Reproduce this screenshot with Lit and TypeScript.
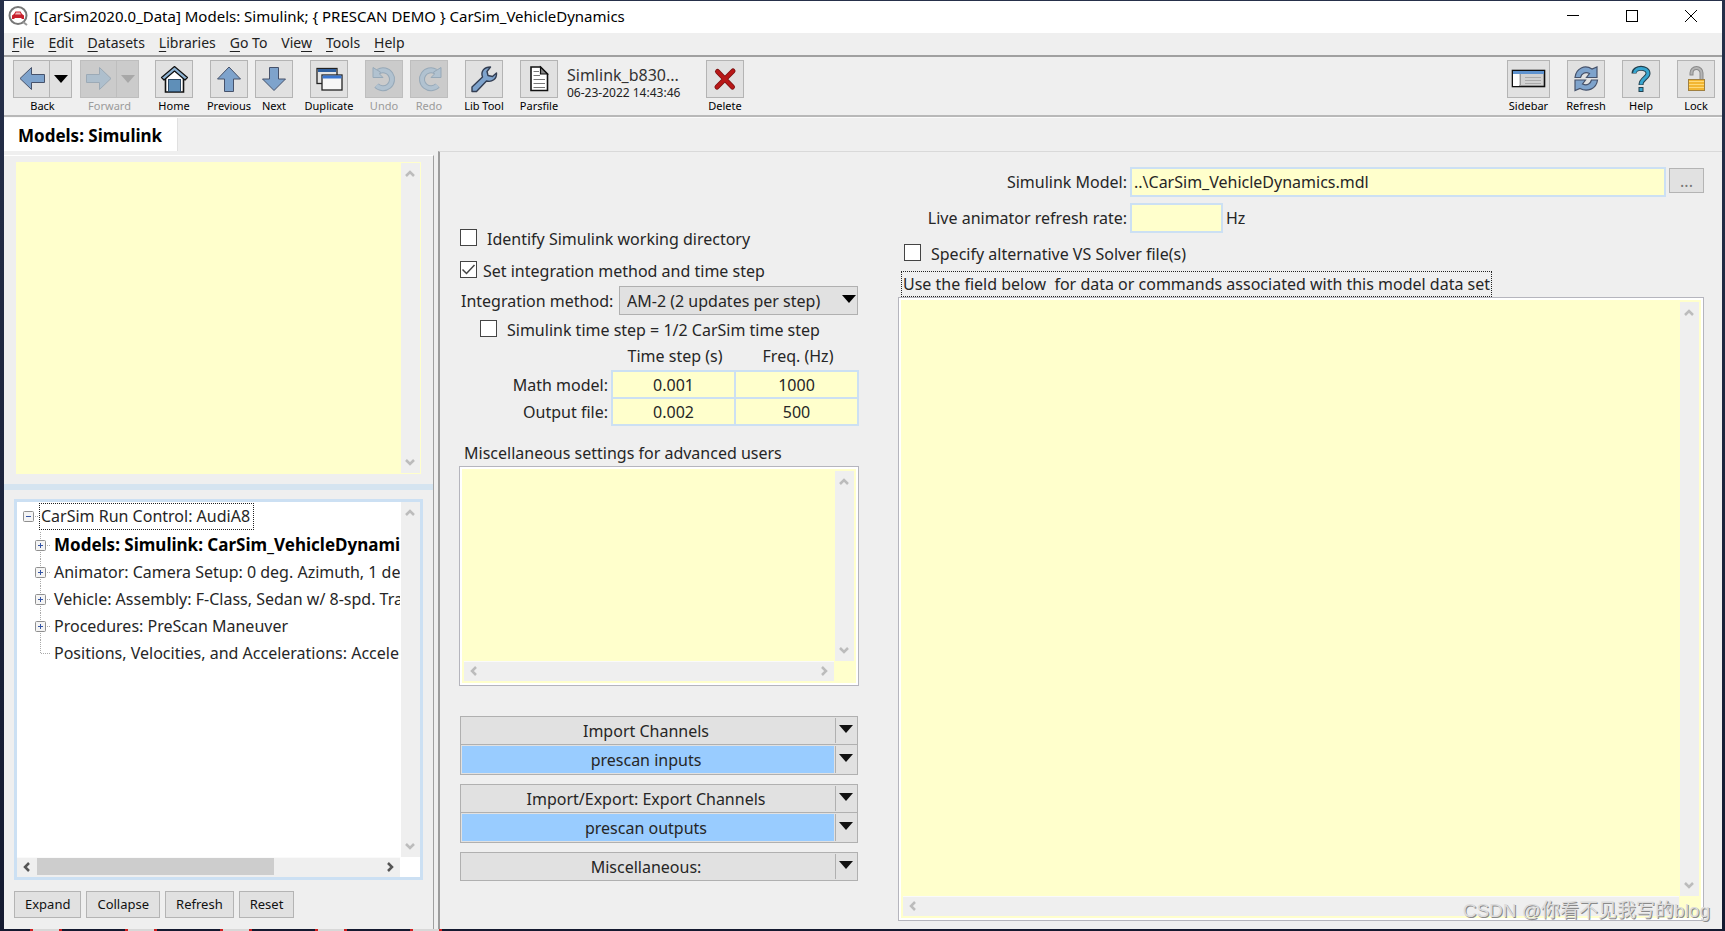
import { LitElement, html, css, svg, nothing } from "lit";
import { customElement, property } from "lit/decorators.js";
import { classMap } from "lit/directives/class-map.js";

const BLUE = "#7ea3cc";
const INK = "#46526b";

const undoShape = svg`
  <path d="M12.5 10.5 A9 9 0 1 1 10.5 24.5" fill="none" stroke="#97a9b8" stroke-width="6"/>
  <path d="M12.5 10.5 A9 9 0 1 1 10.5 24.5" fill="none" stroke="#b1c2d0" stroke-width="4"/>
  <path d="M7 6.5 V16.5 H17 L13.5 13 L14.5 11 L11 9Z" fill="#b1c2d0" stroke="#97a9b8"/>`;

const icons: Record<string, unknown> = {
  back: svg`<path d="M6 17.5 L17.5 6.5 V13.5 H30.5 V21.5 H17.5 V28.5Z" fill=${BLUE} stroke=${INK}/>`,
  forward: svg`<path d="M30 17.5 L18.5 6.5 V13.5 H5.5 V21.5 H18.5 V28.5Z" fill="#aebfcd" stroke="#9caab6"/>`,
  home: svg`
    <path d="M9.5 17 V31 H27.5 V17 L18.5 9Z" fill="#fff" stroke="#111" stroke-width="1.6"/>
    <path d="M18.5 5.5 L5.5 16.5 L8 19 L18.5 10 L29 19 L31.5 16.5Z" fill="#8fb4d4" stroke="#111" stroke-width="1.2" stroke-linejoin="round"/>
    <rect x="12.5" y="18.5" width="12" height="12" fill="#5f8fb8" stroke="#2d4a66"/>`,
  up: svg`<path d="M18 6 L29.5 18 H22.5 V30.5 H13.5 V18 H6.5Z" fill=${BLUE} stroke=${INK}/>`,
  down: svg`<path d="M18 29.5 L29.5 18 H22.5 V6.5 H13.5 V18 H6.5Z" fill=${BLUE} stroke=${INK}/>`,
  duplicate: svg`
    <rect x="6" y="7.5" width="20" height="15" fill="#e4e4e4" stroke="#222" stroke-width="1.3"/>
    <rect x="7" y="8" width="18" height="3" fill="#2f5f9e"/>
    <rect x="11" y="14" width="20" height="15" fill="#f6f6f6" stroke="#222" stroke-width="1.3"/>
    <rect x="11.5" y="14.5" width="19" height="3" fill="#3a76d0"/>`,
  undo: undoShape,
  redo: svg`<g transform="translate(37 0) scale(-1 1)">${undoShape}</g>`,
  wrench: svg`<path d="M6 26 L16.5 16 C14.5 10.5 18 6 24.5 6 L21 10.5 L22 14.5 L26.5 15.5 L30.5 12 C31 18 26 21.5 20.5 20 L10.5 30.5 H6Z" fill=${BLUE} stroke="#333e52" stroke-width="1.4" stroke-linejoin="round"/>`,
  file: svg`
    <path d="M10 6 H19.5 L26.5 13 V29.5 H10Z" fill="#fff" stroke="#111" stroke-width="1.6"/>
    <path d="M19.5 6 V13 H26.5Z" fill="#888" stroke="#111" stroke-width="1.2"/>
    <path d="M12.5 10.5H18M12.5 14.5H19M12.5 18.5H24M12.5 22.5H24M12.5 26.5H24" stroke="#777"/>`,
  remove: svg`
    <path d="M10.5 10.5 L25.5 26 M26 10 L10 26" stroke="#7c1010" stroke-width="5" stroke-linecap="round"/>
    <path d="M10.5 10.5 L25.5 26 M26 10 L10 26" stroke="#b81818" stroke-width="3.4" stroke-linecap="round"/>`,
  sidebar: svg`
    <rect x="4.5" y="9.5" width="32" height="16" fill="#d2d2d2" stroke="#111" stroke-width="1.6"/>
    <rect x="5" y="10" width="31" height="3" fill="#5f93cf"/>
    <rect x="5" y="13" width="6" height="12" fill="#fff"/>
    <path d="M12.5 13V25" stroke="#999"/>
    <path d="M17 16.5H33M17 19.5H33M17 22.5H33" stroke="#aaa"/>`,
  refresh: svg`
    <path d="M7 16.5 C8 7 17 3.5 24 8 L29 6 V16.5 H18.5 L21.5 12.5 C17 10.5 13.5 12.5 12.5 16.5Z" fill=${BLUE} stroke=${INK} stroke-width="1.2"/>
    <path d="M29.5 19 C28.5 28 19 31.5 12 27.5 L7 29.5 V19 H17.5 L14.5 23 C19 25 22.500 23 23.5 19Z" fill=${BLUE} stroke=${INK} stroke-width="1.2"/>`,
  help: svg`
    <path d="M11 12.5 C11 5.5 25 5.5 25 12.5 C25 17 18 17.5 18 24" fill="none" stroke="#23404e" stroke-width="5"/>
    <path d="M11.5 12 C12 6 25 6 25 12.5 C25 17 18 17.5 18 23.5" fill="none" stroke="#37a5cf" stroke-width="3"/>
    <rect x="16" y="26.5" width="4" height="4" fill="#37a5cf" stroke="#23404e"/>`,
  lock: svg`
    <path d="M13.5 14.5 V12 A5 5 0 0 1 23.5 12 V18" fill="none" stroke="#8a8a8a" stroke-width="4"/>
    <path d="M13.5 13.5 V12 A5 5 0 0 1 23.5 12 V18" fill="none" stroke="#b4b4b4" stroke-width="2"/>
    <rect x="10.5" y="18.5" width="16" height="11" fill="#f2b632" stroke="#a08040"/>
    <path d="M11 20.5H26M11 23.5H26M11 26.5H26" stroke="#ffd978"/>`,
};

const caret = html`<svg class="caret" width="14" height="8" viewBox="0 0 14 8" aria-hidden="true"><path d="M0 0H14L7 8Z" fill="currentColor"/></svg>`;

const shared = css`
  * {
    box-sizing: border-box;
  }
  button,
  input,
  select,
  textarea {
    font: inherit;
    color: inherit;
    margin: 0;
    padding: 0;
    border-radius: 0;
    outline: none;
  }
  svg {
    display: block;
    flex: none;
  }
`;

@customElement("scroll-frame")
export class ScrollFrame extends LitElement {
  @property({ type: Boolean }) horizontal = false;
  @property({ type: Number }) thumb = 0;

  static styles = [
    shared,
    css`
      :host {
        display: grid;
        grid-template-columns: minmax(0, 1fr) 19px;
        grid-template-rows: minmax(0, 1fr) auto;
        column-gap: 1px;
        min-width: 0;
        min-height: 0;
      }
      .view {
        display: grid;
        min-width: 0;
        min-height: 0;
        overflow: hidden;
      }
      .bar {
        display: flex;
        justify-content: space-between;
        align-items: center;
        background: #efefef;
        color: #bcbcbc;
      }
      .vertical {
        flex-direction: column;
        padding: 6px 2px 6px 0;
      }
      .across {
        height: 20px;
        padding: 0 5px 2px;
        gap: 5px;
        border-top: 1px solid #fafafa;
      }
      .live {
        color: #555;
      }
      .track {
        flex: 1;
        height: 17px;
      }
      .thumb {
        height: 100%;
        background: #cdcdcd;
      }
    `,
  ];

  private chevron(d: string) {
    return html`<svg width="10" height="10" viewBox="0 0 10 10" aria-hidden="true">
      <path d=${d} fill="none" stroke="currentColor" stroke-width="2.5" />
    </svg>`;
  }

  render() {
    return html`
      <div class="view"><slot></slot></div>
      <div class="bar vertical">${this.chevron("M1 7L5 3L9 7")}${this.chevron("M1 3L5 7L9 3")}</div>
      ${this.horizontal
        ? html`<div class=${classMap({ bar: true, across: true, live: this.thumb > 0 })}>
            ${this.chevron("M7 1L3 5L7 9")}
            <div class="track">
              ${this.thumb > 0 ? html`<div class="thumb" style="width:${this.thumb}%"></div>` : nothing}
            </div>
            ${this.chevron("M3 1L7 5L3 9")}
          </div>`
        : nothing}
    `;
  }
}

interface Tool {
  label: string;
  icon: string;
  near?: boolean;
  disabled?: boolean;
  wide?: boolean;
}

const historyTools: Tool[] = [
  { label: "Back", icon: "back" },
  { label: "Forward", icon: "forward", disabled: true },
];
const editTools: Tool[] = [
  { label: "Home", icon: "home" },
  { label: "Previous", icon: "up" },
  { label: "Next", icon: "down", near: true },
  { label: "Duplicate", icon: "duplicate" },
  { label: "Undo", icon: "undo", disabled: true },
  { label: "Redo", icon: "redo", disabled: true, near: true },
  { label: "Lib Tool", icon: "wrench" },
  { label: "Parsfile", icon: "file" },
];
const viewTools: Tool[] = [
  { label: "Sidebar", icon: "sidebar", wide: true },
  { label: "Refresh", icon: "refresh" },
  { label: "Help", icon: "help" },
  { label: "Lock", icon: "lock" },
];

@customElement("tool-bar")
export class ToolBar extends LitElement {
  static styles = [
    shared,
    css`
      :host {
        display: flex;
        align-items: flex-start;
        padding: 3px 7px 0 9px;
        height: 60px;
        font-size: 11px;
        line-height: 16px;
        color: #000;
        background: #efefef;
        border-bottom: 2px solid #b8b8b8;
      }
      .group {
        display: flex;
      }
      .history {
        gap: 8px;
      }
      .tool {
        display: flex;
        flex-direction: column;
        align-items: center;
        width: 38px;
        margin-left: 17px;
        border: 0;
        background: none;
        white-space: nowrap;
      }
      .near {
        margin-left: 7px;
      }
      .wide {
        width: 43px;
      }
      .split {
        width: 59px;
        margin-left: 0;
      }
      .history + .group {
        margin-left: -1px;
      }
      .face {
        display: flex;
        justify-content: center;
        align-items: center;
        width: 100%;
        min-width: 0;
        height: 38px;
        background: #e1e1e1;
        border: 1px solid #b4b4b4;
      }
      .pair {
        display: flex;
        width: 59px;
      }
      .pair .drop {
        width: 23px;
        margin-left: -1px;
        flex: none;
      }
      .disabled {
        color: #9b9b9b;
      }
      .disabled .face {
        background: #cbcbcb;
        border-color: #bebebe;
        color: #a8a8a8;
      }
      .parsfile {
        display: flex;
        flex-direction: column;
        width: 131px;
        padding: 4px 0 0 9px;
        white-space: nowrap;
        color: #333;
      }
      .name {
        font-size: 16px;
        line-height: 22px;
      }
      .stamp {
        font-size: 12px;
        line-height: 14px;
        color: #222;
      }
      .right {
        margin-left: auto;
      }
    `,
  ];

  private icon(t: Tool) {
    const w = t.wide ? 41 : 36;
    return html`<svg width=${w} height="36" viewBox="0 0 ${w} 36" aria-hidden="true">${icons[t.icon]}</svg>`;
  }

  private tool(t: Tool) {
    return html`<button
      class=${classMap({ tool: true, near: !!t.near, wide: !!t.wide, disabled: !!t.disabled })}
      ?disabled=${!!t.disabled}
    >
      <span class="face">${this.icon(t)}</span><span>${t.label}</span>
    </button>`;
  }

  private splitTool(t: Tool) {
    return html`<div class=${classMap({ tool: true, split: true, disabled: !!t.disabled })}>
      <div class="pair">
        <button class="face" aria-label=${t.label} ?disabled=${!!t.disabled}>${this.icon(t)}</button>
        <button class="face drop" aria-label="${t.label} history" ?disabled=${!!t.disabled}>${caret}</button>
      </div>
      <span>${t.label}</span>
    </div>`;
  }

  render() {
    return html`
      <div class="group history">${historyTools.map((t) => this.splitTool(t))}</div>
      <div class="group">${editTools.map((t) => this.tool(t))}</div>
      <div class="parsfile"><span class="name">Simlink_b830...</span><span class="stamp">06-23-2022 14:43:46</span></div>
      <div class="group">${this.tool({ label: "Delete", icon: "remove" })}</div>
      <div class="group right">${viewTools.map((t) => this.tool(t))}</div>
    `;
  }
}

const treeItems = [
  { text: "Models: Simulink: CarSim_VehicleDynamics", current: true, branch: true },
  { text: "Animator: Camera Setup: 0 deg. Azimuth, 1 deg. El.", branch: true },
  { text: "Vehicle: Assembly: F-Class, Sedan w/ 8-spd. Trans.", branch: true },
  { text: "Procedures: PreScan Maneuver", branch: true },
  { text: "Positions, Velocities, and Accelerations: Accelerations" },
];

@customElement("side-panel")
export class SidePanel extends LitElement {
  static styles = [
    shared,
    css`
      :host {
        display: flex;
        flex-direction: column;
        width: 430px;
        flex: none;
        border-right: 1px solid #a0a0a0;
        border-top: 1px solid #fff;
      }
      .notes {
        flex: 313 1 0;
        margin: 6px 12px 10px 12px;
        background: #ffffcc;
        border: 1px solid #ffffcc;
      }
      .notes textarea {
        border: 0;
        background: #ffffcc;
        resize: none;
      }
      .divider {
        height: 6px;
        background: #d5e4f0;
        flex: none;
      }
      .tree {
        flex: 379 1 0;
        margin: 9px 10px 0 10px;
        background: #fff;
        border: 3px solid #cce0f3;
      }
      ul {
        list-style: none;
        margin: 0;
        padding: 0;
      }
      .row {
        display: flex;
        align-items: center;
        height: 27px;
        white-space: nowrap;
      }
      .root {
        height: 30px;
        padding-left: 6px;
      }
      .child {
        padding-left: 18px;
      }
      .child svg {
        margin-right: 2px;
      }
      .root svg {
        margin-right: -1px;
      }
      .focus {
        border: 1px dotted #222;
        padding: 0 3px 0 1px;
        line-height: 25px;
      }
      .current {
        font-size: 17px;
        font-weight: 700;
        color: #000;
      }
      .actions {
        display: flex;
        gap: 5px;
        padding: 11px 10px;
        font-size: 13px;
        line-height: 25px;
        color: #111;
      }
      .actions button {
        height: 27px;
        padding: 0 10px;
        background: #e1e1e1;
        border: 1px solid #b4b4b4;
      }
    `,
  ];

  private node(kind: "root" | "branch" | "leaf", last = false) {
    const dots = last ? "M5.5 0V13.5" : "M5.5 0V27";
    return html`<svg width="17" height="27" viewBox="0 0 17 27" aria-hidden="true">
      ${kind === "root" ? nothing : svg`<path d=${dots} stroke="#aaa" stroke-dasharray="1 1"/>`}
      <path d=${kind === "leaf" ? "M6 13.5H16" : "M12 13.5H16"} stroke="#aaa" stroke-dasharray="1 1" />
      ${kind === "leaf"
        ? nothing
        : svg`<rect x="0.5" y="8.5" width="10" height="10" rx="1" fill="#f4f4f4" stroke="#909090"/>
            <path d=${kind === "root" ? "M3 13.5H8" : "M3 13.5H8M5.5 11V16"} stroke="#3555a5"/>`}
    </svg>`;
  }

  render() {
    return html`
      <scroll-frame class="notes"><textarea aria-label="Notes"></textarea></scroll-frame>
      <div class="divider"></div>
      <scroll-frame class="tree" horizontal thumb="69">
        <ul>
          <li>
            <div class="row root">${this.node("root")}<span class="focus">CarSim Run Control: AudiA8</span></div>
            <ul>
              ${treeItems.map(
                (t, i) => html`<li class="row child">
                  ${this.node(t.branch ? "branch" : "leaf", i === treeItems.length - 1)}
                  <span class=${classMap({ current: !!t.current })}>${t.text}</span>
                </li>`,
              )}
            </ul>
          </li>
        </ul>
      </scroll-frame>
      <div class="actions">
        ${["Expand", "Collapse", "Refresh", "Reset"].map((l) => html`<button>${l}</button>`)}
      </div>
    `;
  }
}

const channelGroups = [
  [{ text: "Import Channels" }, { text: "prescan inputs", linked: true }],
  [{ text: "Import/Export: Export Channels" }, { text: "prescan outputs", linked: true }],
  [{ text: "Miscellaneous:" }],
];

const timing = [
  { name: "Math model:", step: "0.001", freq: "1000" },
  { name: "Output file:", step: "0.002", freq: "500" },
];

@customElement("model-form")
export class ModelForm extends LitElement {
  static styles = [
    shared,
    css`
      :host {
        display: grid;
        grid-template-columns: 400px minmax(0, 1fr);
        column-gap: 39px;
        flex: 1;
        min-width: 0;
        padding: 14px 18px 8px 19px;
        border-left: 2px solid #9d9d9d;
        border-top: 1px solid #d9d9d9;
        margin-left: 4px;
      }
      .solver {
        display: flex;
        flex-direction: column;
        padding-top: 56px;
      }
      .model {
        display: flex;
        flex-direction: column;
        min-height: 0;
        padding-top: 1px;
      }
      .check {
        display: flex;
        align-items: center;
        gap: 10px;
        height: 30px;
        padding-left: 1px;
      }
      .check span {
        padding-top: 3px;
      }
      .tight {
        gap: 6px;
        height: 34px;
      }
      .nested {
        height: 27px;
        padding-left: 21px;
      }
      .check input {
        appearance: none;
        width: 17px;
        height: 17px;
        background: #fff;
        border: 1px solid #444;
        flex: none;
      }
      .check input:checked {
        background: #fff
          url("data:image/svg+xml,%3Csvg xmlns='http://www.w3.org/2000/svg' viewBox='0 0 15 15'%3E%3Cpath d='M1.5 7.5L5.5 11.5L13.5 3' fill='none' stroke='%23444' stroke-width='1.5'/%3E%3C/svg%3E");
      }
      .method {
        display: flex;
        align-items: center;
        justify-content: space-between;
        padding: 0 1px 0 2px;
      }
      .picker {
        display: grid;
        align-items: center;
        width: 239px;
      }
      .picker > * {
        grid-area: 1 / 1;
      }
      .picker select {
        appearance: none;
        width: 100%;
        height: 29px;
        padding-left: 7px;
        background: #e1e1e1;
        border: 1px solid #b0b0b0;
      }
      .caret {
        pointer-events: none;
      }
      .picker .caret {
        justify-self: end;
        margin: 0 2px 3px 0;
        color: #000;
      }
      table {
        border-collapse: collapse;
        width: 100%;
        margin-bottom: 14px;
      }
      th {
        font-weight: 400;
        padding: 0;
      }
      thead th {
        height: 29px;
        padding: 0 0 0 3px;
      }
      td {
        width: 123px;
        padding: 0;
        border: 2px solid #cce0f3;
      }
      td input {
        display: block;
        width: 100%;
        height: 25px;
        border: 0;
        background: #ffffcc;
        text-align: center;
      }
      tbody th {
        text-align: right;
        padding-right: 3px;
      }
      .caption {
        padding-left: 5px;
        line-height: 26px;
      }
      .editor {
        background: #ffffcc;
        border: 1px solid #b5b5bd;
        outline: 2px solid #fff;
        outline-offset: -3px;
        padding: 4px;
      }
      .editor textarea {
        border: 0;
        background: #ffffcc;
        resize: none;
      }
      .misc {
        height: 220px;
      }
      .channels {
        display: flex;
        flex-direction: column;
        gap: 9px;
        padding: 30px 1px 0;
      }
      .stack {
        border: 1px solid #b0b0b0;
        background: #e1e1e1;
      }
      .row {
        display: flex;
        height: 27px;
      }
      .row + .row {
        border-top: 1px solid #b0b0b0;
        height: 30px;
      }
      .row button {
        border: 0;
        background: none;
      }
      .row .pick {
        flex: 1;
        padding-right: 4px;
      }
      .row .linked {
        background: #99ccff;
        margin: 1px;
      }
      .row .more {
        width: 22px;
        padding: 0 0 4px 3px;
        margin: 1px 0;
        border-left: 1px solid #b0b0b0;
        color: #111;
      }
      .fields {
        display: grid;
        grid-template-columns: 229px minmax(0, 1fr) 35px;
        column-gap: 3px;
        row-gap: 6px;
        align-items: center;
      }
      .fields label {
        text-align: right;
      }
      .text {
        height: 30px;
        width: 100%;
        padding-left: 2px;
        background: #ffffcc;
        border: 2px solid #cce0f3;
      }
      .browse {
        height: 25px;
        margin-bottom: 3px;
        line-height: 20px;
        background: #e1e1e1;
        border: 1px solid #b4b4b4;
        color: #777;
      }
      .rate {
        display: flex;
        align-items: center;
        gap: 3px;
      }
      .short {
        width: 93px;
      }
      .solverfile {
        height: 38px;
        padding-left: 6px;
      }
      .hint {
        align-self: flex-start;
        margin-left: 3px;
        padding: 0 1px;
        border: 1px dotted #222;
        line-height: 24px;
        white-space: pre;
      }
      .commands {
        flex: 1;
      }
    `,
  ];

  render() {
    return html`
      <section class="solver">
        <label class="check"><input type="checkbox" /><span>Identify Simulink working directory</span></label>
        <label class="check tight"><input type="checkbox" checked /><span>Set integration method and time step</span></label>
        <div class="method">
          <label for="method">Integration method:</label>
          <div class="picker">
            <select id="method">
              <option>AM-2 (2 updates per step)</option>
            </select>
            ${caret}
          </div>
        </div>
        <label class="check nested"><input type="checkbox" /><span>Simulink time step = 1/2 CarSim time step</span></label>
        <table>
          <thead>
            <tr>
              <th></th>
              <th scope="col">Time step (s)</th>
              <th scope="col">Freq. (Hz)</th>
            </tr>
          </thead>
          <tbody>
            ${timing.map(
              (r) => html`<tr>
                <th scope="row">${r.name}</th>
                <td><input aria-label="${r.name} time step" .value=${r.step} /></td>
                <td><input aria-label="${r.name} frequency" .value=${r.freq} /></td>
              </tr>`,
            )}
          </tbody>
        </table>
        <label class="caption" for="misc">Miscellaneous settings for advanced users</label>
        <scroll-frame class="editor misc" horizontal><textarea id="misc"></textarea></scroll-frame>
        <div class="channels">
          ${channelGroups.map(
            (g) => html`<div class="stack">
              ${g.map(
                (c: { text: string; linked?: boolean }) => html`<div class="row">
                  <button class=${classMap({ pick: true, linked: !!c.linked })}>${c.text}</button>
                  <button class="more" aria-label="${c.text} options">${caret}</button>
                </div>`,
              )}
            </div>`,
          )}
        </div>
      </section>
      <section class="model">
        <div class="fields">
          <label for="mdl">Simulink Model:</label>
          <input id="mdl" class="text" .value=${"..\\CarSim_VehicleDynamics.mdl"} />
          <button class="browse">...</button>
          <label for="rate">Live animator refresh rate:</label>
          <div class="rate"><input id="rate" class="text short" /><span>Hz</span></div>
        </div>
        <label class="check solverfile"><input type="checkbox" /><span>Specify alternative VS Solver file(s)</span></label>
        <label class="hint" for="commands">Use the field below  for data or commands associated with this model data set</label>
        <scroll-frame class="editor commands" horizontal><textarea id="commands"></textarea></scroll-frame>
      </section>
    `;
  }
}

const menus: [string, string, string][] = [
  ["", "F", "ile"],
  ["", "E", "dit"],
  ["", "D", "atasets"],
  ["", "L", "ibraries"],
  ["", "G", "o To"],
  ["Vie", "w", ""],
  ["", "T", "ools"],
  ["", "H", "elp"],
];

@customElement("app-root")
export class AppRoot extends LitElement {
  static styles = [
    shared,
    css`
      :host {
        display: flex;
        flex-direction: column;
        height: 100vh;
        padding: 1px 3px 0 4px;
        background: linear-gradient(#26304a, #141a30);
        font-family: "Noto Sans", "Open Sans", "Noto Sans CJK SC", sans-serif;
        font-size: 16px;
        line-height: 22px;
        color: #262626;
        overflow: hidden;
      }
      .titlebar {
        display: flex;
        align-items: center;
        height: 32px;
        flex: none;
        padding: 0 2px 2px 4px;
        gap: 6px;
        background: #fff;
        color: #000;
        font-size: 15px;
        white-space: pre;
      }
      .controls {
        display: flex;
        margin-left: auto;
      }
      .controls button {
        display: flex;
        justify-content: center;
        align-items: center;
        width: 59px;
        height: 30px;
        border: 0;
        background: none;
      }
      .menubar {
        display: flex;
        gap: 14px;
        height: 24px;
        flex: none;
        padding: 0 0 2px 8px;
        background: #efefef;
        border-bottom: 2px solid #a0a0a0;
        font-size: 14px;
        color: #222;
      }
      .menubar button {
        border: 0;
        background: none;
        line-height: 20px;
      }
      .menubar u {
        text-underline-offset: 3px;
      }
      .tabs {
        display: flex;
        height: 34px;
        flex: none;
        background: #efefef;
        border-top: 1px solid #fafafa;
      }
      .tab {
        padding: 2px 15px 0 14px;
        border: 0;
        border-right: 1px solid #e0e0e0;
        background: #fff;
        font-size: 17px;
        font-weight: 700;
        color: #000;
      }
      .body {
        display: flex;
        flex: 1;
        min-height: 0;
        background: #efefef;
      }
      .side {
        margin-top: 4px;
      }
      .taskbar {
        display: flex;
        gap: 63px;
        height: 3px;
        flex: none;
        padding-left: 26px;
      }
      .taskbar i {
        width: 32px;
        background: #d8d8d8;
        border: solid #d02020;
        border-width: 0 3px;
      }
      .watermark {
        position: absolute;
        right: 15px;
        bottom: 6px;
        font: 19px/28px "Liberation Sans", "Noto Sans CJK SC", sans-serif;
        color: #dcdcdc;
        text-shadow: 1px 1px 0 #8a8a8a;
        pointer-events: none;
      }
    `,
  ];

  render() {
    return html`
      <header class="titlebar">
        <svg width="20" height="20" viewBox="0 0 20 20" aria-hidden="true">
          <circle cx="10" cy="9.5" r="8.5" fill="#fff" stroke="#777" stroke-width="2" />
          <path d="M15 16L19 19" stroke="#999" stroke-width="2" />
          <path d="M4 13V9.5L6 8L7.5 5.5H12.5L14 8L16 9.5V13H13.5V12H6.5V13Z" fill="#c8202c" />
          <path d="M8 6.5H12L13 8.5H7Z" fill="#f0b8bc" />
        </svg>
        <span>[CarSim2020.0_Data] Models: Simulink; { PRESCAN DEMO } CarSim_VehicleDynamics</span>
        <div class="controls">
          <button aria-label="Minimize"><svg width="12" height="12"><path d="M0 5.5H12" stroke="#000" /></svg></button>
          <button aria-label="Maximize"><svg width="12" height="12"><rect x="0.5" y="0.5" width="11" height="11" fill="none" stroke="#000" /></svg></button>
          <button aria-label="Close"><svg width="12" height="12"><path d="M0 0L12 12M12 0L0 12" stroke="#000" /></svg></button>
        </div>
      </header>
      <nav class="menubar">${menus.map(([a, k, b]) => html`<button>${a}<u>${k}</u>${b}</button>`)}</nav>
      <tool-bar></tool-bar>
      <div class="tabs"><button class="tab">Models: Simulink</button></div>
      <main class="body">
        <side-panel class="side"></side-panel>
        <model-form></model-form>
      </main>
      <div class="taskbar" aria-hidden="true">${[0, 1, 2, 3, 4].map(() => html`<i></i>`)}</div>
      <div class="watermark">CSDN @你看不见我写的blog</div>
    `;
  }
}
